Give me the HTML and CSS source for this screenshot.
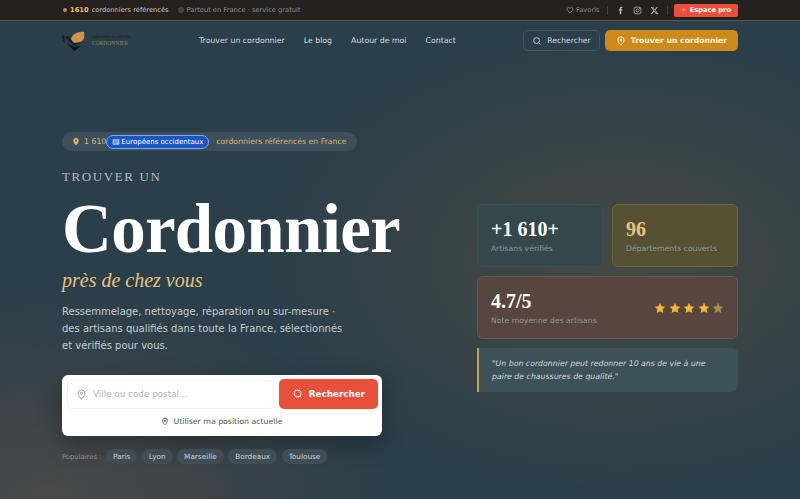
FILE: index.html
```html
<!DOCTYPE html>
<html lang="fr">
<head>
    <meta charset="UTF-8">
    <meta name="viewport" content="width=device-width, initial-scale=1.0">
    <title>Trouver un cordonnier</title>
    <link rel="stylesheet" href="styles.css">
</head>
<body>
    <div class="topbar">
        <div class="topbar-side">
            <span class="dot dot-gold"></span>
            <span class="topbar-count">1610</span>
            <span class="topbar-text">cordonniers référencés</span>
            <span class="dot dot-grey"></span>
            <span class="topbar-muted">Partout en France · service gratuit</span>
        </div>
        <div class="topbar-side">
            <svg class="icon-fav" viewBox="0 0 24 24" fill="none" stroke="currentColor" stroke-width="2"><path d="M12 20.5 4.3 12.8a4.8 4.8 0 0 1 6.8-6.8l.9.9.9-.9a4.800 4.800 0 0 1 6.800 6.800z"/></svg>
            <span class="topbar-muted fav-label">Favoris</span>
            <span class="sep"></span>
            <svg class="social" viewBox="0 0 24 24" fill="currentColor"><path d="M14 8.500V6.600c0-.9.400-1.300 1.400-1.300H17V2h-2.600C11.300 2 10 3.700 10 6.200v2.300H7.500V12H10v10h4V12h2.600l.5-3.500z"/></svg>
            <svg class="social" viewBox="0 0 24 24" fill="none" stroke="currentColor" stroke-width="2"><rect x="3" y="3" width="18" height="18" rx="5"/><circle cx="12" cy="12" r="4"/><circle cx="17.300" cy="6.700" r="0.600"/></svg>
            <svg class="social" viewBox="0 0 24 24" fill="currentColor"><path d="M18 2.500h3.200l-7 8 8.300 11h-6.500l-5.100-6.600-5.800 6.600H1.900l7.500-8.600L1.500 2.500h6.700l4.600 6.100zm-1.100 17h1.800L7.200 4.300H5.300z"/></svg>
            <span class="sep"></span>
            <a class="pro-btn"><span class="pro-plus">+</span> Espace pro</a>
        </div>
    </div>

    <header class="nav">
        <div class="logo">
            <svg class="logo-mark" viewBox="0 0 24 20">
                <path d="M9 8 C10 3 17 0 22 1 C23 6 22 10 18 11 C14 13 10 12 9 8Z" fill="#d3924a"/>
                <path d="M0 3 C0 7 1 10 3 12 L2 5Z" fill="#14191c"/>
                <path d="M3 6 L12 15 L21 11 L12 12 L6 5Z" fill="#14222a"/>
                <path d="M4 11 L12 20 L19 15 L12 16Z" fill="#0e1519"/>
            </svg>
            <div class="logo-text">
                <span class="logo-small">ANNUAIRE DU MÉTIER</span>
                <span class="logo-name">CORDONNIER</span>
            </div>
        </div>
        <nav class="nav-links">
            <a>Trouver un cordonnier</a>
            <a>Le blog</a>
            <a>Autour de moi</a>
            <a>Contact</a>
        </nav>
        <div class="nav-actions">
            <a class="btn-outline">
                <svg class="icon-nav" viewBox="0 0 24 24" fill="none" stroke="currentColor" stroke-width="2"><circle cx="11" cy="11" r="7"/><path d="m20 20-4-4"/></svg>
                Rechercher
            </a>
            <a class="btn-gold">
                <svg class="icon-nav" viewBox="0 0 24 24" fill="none" stroke="currentColor" stroke-width="2"><path d="M12 22s7.500-6.500 7.500-12.500a7.500 7.500 0 0 0-15 0C4.500 15.500 12 22 12 22z"/><circle cx="12" cy="9.500" r="2.500"/></svg>
                Trouver un cordonnier
            </a>
        </div>
    </header>

    <main class="hero">
        <section class="hero-left">
            <div class="badge">
                <svg class="badge-pin" viewBox="0 0 24 24" fill="#e8b56a"><path fill-rule="evenodd" d="M12 23s8-7 8-13.500a8 8 0 0 0-16 0C4 16 12 23 12 23zm0-10.500a3 3 0 1 0 0-6 3 3 0 0 0 0 6z"/></svg>
                <span class="badge-num">1 610</span>
                <span class="translate-chip">
                    <svg class="chip-icon" viewBox="0 0 12 12"><rect x="1" y="2" width="10" height="8" rx="1" fill="#a9c4f5"/><path d="M3 4.500h6M3 6h6M3 7.500h4" stroke="#1a56c4" stroke-width="0.800"/></svg>
                    Européens occidentaux
                </span>
                <span class="badge-text">cordonniers référencés en France</span>
            </div>
            <div class="eyebrow">TROUVER UN</div>
            <h1 class="title">Cordonnier</h1>
            <div class="subtitle">près de chez vous</div>
            <p class="lead">Ressemmelage, nettoyage, réparation ou sur-mesure · des artisans qualifiés dans toute la France, sélectionnés et vérifiés pour vous.</p>
            <div class="search-card">
                <div class="search-row">
                    <div class="search-input">
                        <svg class="icon-input" viewBox="0 0 24 24" fill="none" stroke="currentColor" stroke-width="2"><path d="M12 22s7.500-6.500 7.500-12.500a7.500 7.500 0 0 0-15 0C4.500 15.500 12 22 12 22z"/><circle cx="12" cy="9.500" r="2.500"/></svg>
                        <span>Ville ou code postal...</span>
                    </div>
                    <a class="search-btn">
                        <svg class="icon-search" viewBox="0 0 24 24" fill="none" stroke="currentColor" stroke-width="2"><circle cx="11" cy="11" r="7"/><path d="m20 20-4-4"/></svg>
                        Rechercher
                    </a>
                </div>
                <div class="geo">
                    <svg class="icon-geo" viewBox="0 0 24 24" fill="none" stroke="currentColor" stroke-width="2.200"><path d="M12 22s7.500-6.500 7.500-12.500a7.500 7.500 0 0 0-15 0C4.500 15.500 12 22 12 22z"/><circle cx="12" cy="9.500" r="2.500"/></svg>
                    Utiliser ma position actuelle
                </div>
            </div>
            <div class="popular">
                <span class="popular-label">Populaires :</span>
                <a class="tag">Paris</a>
                <a class="tag">Lyon</a>
                <a class="tag">Marseille</a>
                <a class="tag">Bordeaux</a>
                <a class="tag">Toulouse</a>
            </div>
        </section>

        <aside class="hero-right">
            <div class="stats-row">
                <div class="stat stat-plain">
                    <div class="stat-num">+1 610+</div>
                    <div class="stat-label">Artisans vérifiés</div>
                </div>
                <div class="stat stat-gold">
                    <div class="stat-num stat-num-gold">96</div>
                    <div class="stat-label">Départements couverts</div>
                </div>
            </div>
            <div class="stat stat-rating">
                <div>
                    <div class="stat-num">4.7/5</div>
                    <div class="stat-label">Note moyenne des artisans</div>
                </div>
                <div class="stars">
                    <svg class="star" viewBox="0 0 24 24"><path d="M12 1.500l3.200 7 7.600.9-5.600 5.200 1.500 7.500L12 18.300l-6.700 3.800 1.500-7.500-5.600-5.200 7.600-.9z"/></svg>
                    <svg class="star" viewBox="0 0 24 24"><path d="M12 1.500l3.200 7 7.600.9-5.600 5.200 1.500 7.500L12 18.300l-6.700 3.800 1.500-7.500-5.600-5.200 7.600-.9z"/></svg>
                    <svg class="star" viewBox="0 0 24 24"><path d="M12 1.500l3.200 7 7.600.9-5.600 5.200 1.500 7.500L12 18.300l-6.700 3.800 1.500-7.500-5.600-5.200 7.600-.9z"/></svg>
                    <svg class="star" viewBox="0 0 24 24"><path d="M12 1.500l3.200 7 7.600.9-5.600 5.200 1.500 7.500L12 18.300l-6.700 3.800 1.500-7.500-5.600-5.200 7.600-.9z"/></svg>
                    <svg class="star star-dim" viewBox="0 0 24 24"><path d="M12 1.500l3.200 7 7.600.9-5.600 5.200 1.500 7.500L12 18.300l-6.700 3.800 1.500-7.500-5.600-5.200 7.600-.9z"/></svg>
                </div>
            </div>
            <blockquote class="quote">"Un bon cordonnier peut redonner 10 ans de vie à une paire de chaussures de qualité."</blockquote>
        </aside>
    </main>
</body>
</html>
```

FILE: styles.css
```css
* {
    box-sizing: border-box;
}

html, body {
    height: 100%;
}

body {
    margin: 0;
    overflow: hidden;
    font-family: "DejaVu Sans", sans-serif;
    color: #fff;
    background-color: #2b3f4a;
    background-image:
        radial-gradient(ellipse 340px 210px at 50px 499px, rgba(190, 110, 60, 0.2), rgba(190, 110, 60, 0) 100%),
        radial-gradient(ellipse 360px 230px at 620px 260px, rgba(200, 120, 30, 0.17), rgba(200, 120, 30, 0) 100%);
}

.topbar {
    height: 21px;
    padding: 0 62px;
    display: flex;
    justify-content: space-between;
    align-items: center;
    background-color: #25211e;
    border-bottom: 1px solid #5b574d;
    font-size: 6.700px;
}

.topbar-side {
    display: flex;
    align-items: center;
}

.dot {
    width: 4px;
    height: 4px;
    border-radius: 50%;
}

.dot-gold {
    background-color: #c98f3e;
    margin-left: 1px;
    margin-right: 3px;
}

.dot-grey {
    width: 6px;
    height: 6px;
    background-color: #45423e;
    margin: 0 3px 0 9px;
}

.topbar-count {
    color: #eec17e;
    font-weight: 700;
    margin-right: 3px;
}

.topbar-text {
    color: #c9c6c0;
}

.topbar-muted {
    color: #8f8c86;
}

.icon-fav {
    width: 8px;
    height: 8px;
    color: #aaa7a1;
    margin-right: 2px;
}

.fav-label {
    margin-right: 3px;
}

.sep {
    width: 1px;
    height: 9px;
    background-color: #45423e;
    margin: 0 4px;
}

.social {
    width: 9px;
    height: 9px;
    color: #bdbab4;
    margin: 0 4px;
}

.pro-btn {
    height: 13px;
    width: 64px;
    margin-left: 2.500px;
    display: flex;
    align-items: center;
    justify-content: center;
    gap: 3px;
    border-radius: 2px;
    background-color: #e9503c;
    font-weight: 700;
    color: #fff;
}

.pro-plus {
    font-weight: 400;
    color: #ffc9bd;
}

.nav {
    height: 39px;
    padding: 0 62px;
    display: flex;
    align-items: center;
}

.logo {
    width: 137px;
    display: flex;
    align-items: center;
    gap: 6px;
}

.logo-mark {
    width: 24px;
    height: 20px;
}

.logo-text {
    display: flex;
    flex-direction: column;
}

.logo-small {
    font-size: 3.500px;
    color: #15181a;
    line-height: 5px;
}

.logo-name {
    font-family: "Liberation Serif", serif;
    font-size: 5.500px;
    color: #8a8360;
    line-height: 6px;
}

.nav-links {
    display: flex;
    gap: 19px;
    font-size: 7.800px;
    color: #d5dde0;
}

.nav-actions {
    margin-left: auto;
    display: flex;
    gap: 5px;
}

.btn-outline, .btn-gold {
    height: 21px;
    display: flex;
    align-items: center;
    justify-content: center;
    gap: 5px;
    border-radius: 5px;
    font-size: 7.700px;
}

.btn-outline {
    width: 77px;
    border: 1px solid #3e5765;
    color: #d5dde0;
}

.btn-gold {
    width: 133px;
    background-color: #cb8a1a;
    font-weight: 700;
    color: #fff6df;
}

.icon-nav {
    width: 10px;
    height: 10px;
}

.hero {
    padding: 72px 62px 0;
    display: flex;
    justify-content: space-between;
    align-items: flex-start;
}

.hero-left {
    width: 320px;
}

.badge {
    width: 295px;
    height: 19px;
    display: flex;
    align-items: center;
    padding-left: 10px;
    border-radius: 10px;
    background-color: #3d4f58;
    font-size: 7.800px;
    color: #d5b880;
    white-space: nowrap;
}

.badge-pin {
    flex: none;
    width: 8px;
    height: 9px;
    margin-right: 4px;
}

.translate-chip {
    height: 14px;
    padding: 0 5px;
    margin-right: 7px;
    display: flex;
    align-items: center;
    gap: 1px;
    border: 1px solid #7fa8ea;
    border-radius: 7px;
    background-color: #1a56c4;
    color: #fff;
    font-size: 7px;
}

.chip-icon {
    width: 8px;
    height: 8px;
}

.eyebrow {
    margin-top: 18px;
    font-family: "Liberation Serif", serif;
    font-size: 13px;
    line-height: 16px;
    letter-spacing: 1.600px;
    color: #b3bcbf;
}

.title {
    margin: 8px 0 0;
    font-family: "Liberation Serif", serif;
    font-size: 69px;
    line-height: 72px;
    font-weight: 700;
    letter-spacing: -0.700px;
    color: #fff;
}

.subtitle {
    margin-top: 2px;
    font-family: "Liberation Serif", serif;
    font-style: italic;
    font-size: 20px;
    line-height: 26px;
    color: #e9c27f;
}

.lead {
    margin: 10px 0 0;
    width: 290px;
    font-size: 10px;
    line-height: 17px;
    color: #c5ced1;
}

.search-card {
    margin-top: 21px;
    width: 320px;
    height: 61px;
    padding: 4px;
    border-radius: 6px;
    background-color: #fff;
    box-shadow: 0 8px 24px rgba(0, 0, 0, 0.3);
}

.search-row {
    display: flex;
    align-items: center;
    gap: 5px;
}

.search-input {
    flex: 1;
    height: 29px;
    margin-left: 1px;
    padding-left: 8px;
    display: flex;
    align-items: center;
    gap: 6px;
    border: 1px solid #f3f3f3;
    border-radius: 5px;
    font-size: 8.800px;
    color: #b3b3b3;
}

.icon-input {
    width: 11px;
    height: 11px;
    color: #9a9a9a;
}

.search-btn {
    width: 99px;
    height: 30px;
    display: flex;
    align-items: center;
    justify-content: center;
    gap: 5px;
    border-radius: 5px;
    background-color: #e9503c;
    font-size: 8.800px;
    font-weight: 700;
    color: #fff;
}

.icon-search {
    width: 12px;
    height: 12px;
}

.geo {
    margin-top: 8px;
    display: flex;
    align-items: center;
    justify-content: center;
    gap: 4px;
    font-size: 7.800px;
    color: #555;
}

.icon-geo {
    width: 8px;
    height: 9px;
    color: #444;
}

.popular {
    margin-top: 13px;
    display: flex;
    align-items: center;
    gap: 4.500px;
}

.popular-label {
    font-size: 6.800px;
    color: #85908f;
}

.tag {
    height: 15px;
    padding: 0 7px;
    display: flex;
    align-items: center;
    border-radius: 8px;
    background-color: #414d54;
    font-size: 7.300px;
    color: #cdd4d6;
}

.hero-right {
    width: 261px;
    margin-top: 72px;
}

.stats-row {
    display: flex;
    gap: 9px;
}

.stat {
    border-radius: 6px;
    padding: 13px;
}

.stats-row .stat {
    flex: 1;
    height: 63px;
}

.stat-plain {
    border: 1px solid #3d4f50;
    background-color: #34474a;
}

.stat-gold {
    border: 1px solid #6d6638;
    background-color: #575133;
}

.stat-rating {
    margin-top: 9px;
    height: 63px;
    display: flex;
    justify-content: space-between;
    align-items: center;
    border: 1px solid #6b5650;
    background-color: #574540;
}

.stat-num {
    font-family: "Liberation Serif", serif;
    font-size: 20px;
    line-height: 23px;
    font-weight: 700;
    color: #fff;
}

.stat-num-gold {
    color: #e9c27f;
}

.stat-label {
    margin-top: 2px;
    font-size: 7.700px;
    line-height: 11px;
    color: #8b9a99;
}

.stars {
    display: flex;
    gap: 2.500px;
}

.star {
    width: 12px;
    height: 12px;
    fill: #f7b733;
}

.star-dim {
    fill: #a38c58;
}

.quote {
    margin: 9px 0 0;
    height: 44px;
    padding: 9px 14px 0 13px;
    border-left: 2px solid #cf9f47;
    border-radius: 0 6px 6px 0;
    background-color: #3c5158;
    font-size: 7.800px;
    font-style: italic;
    line-height: 13px;
    color: #d3d9da;
}
```
